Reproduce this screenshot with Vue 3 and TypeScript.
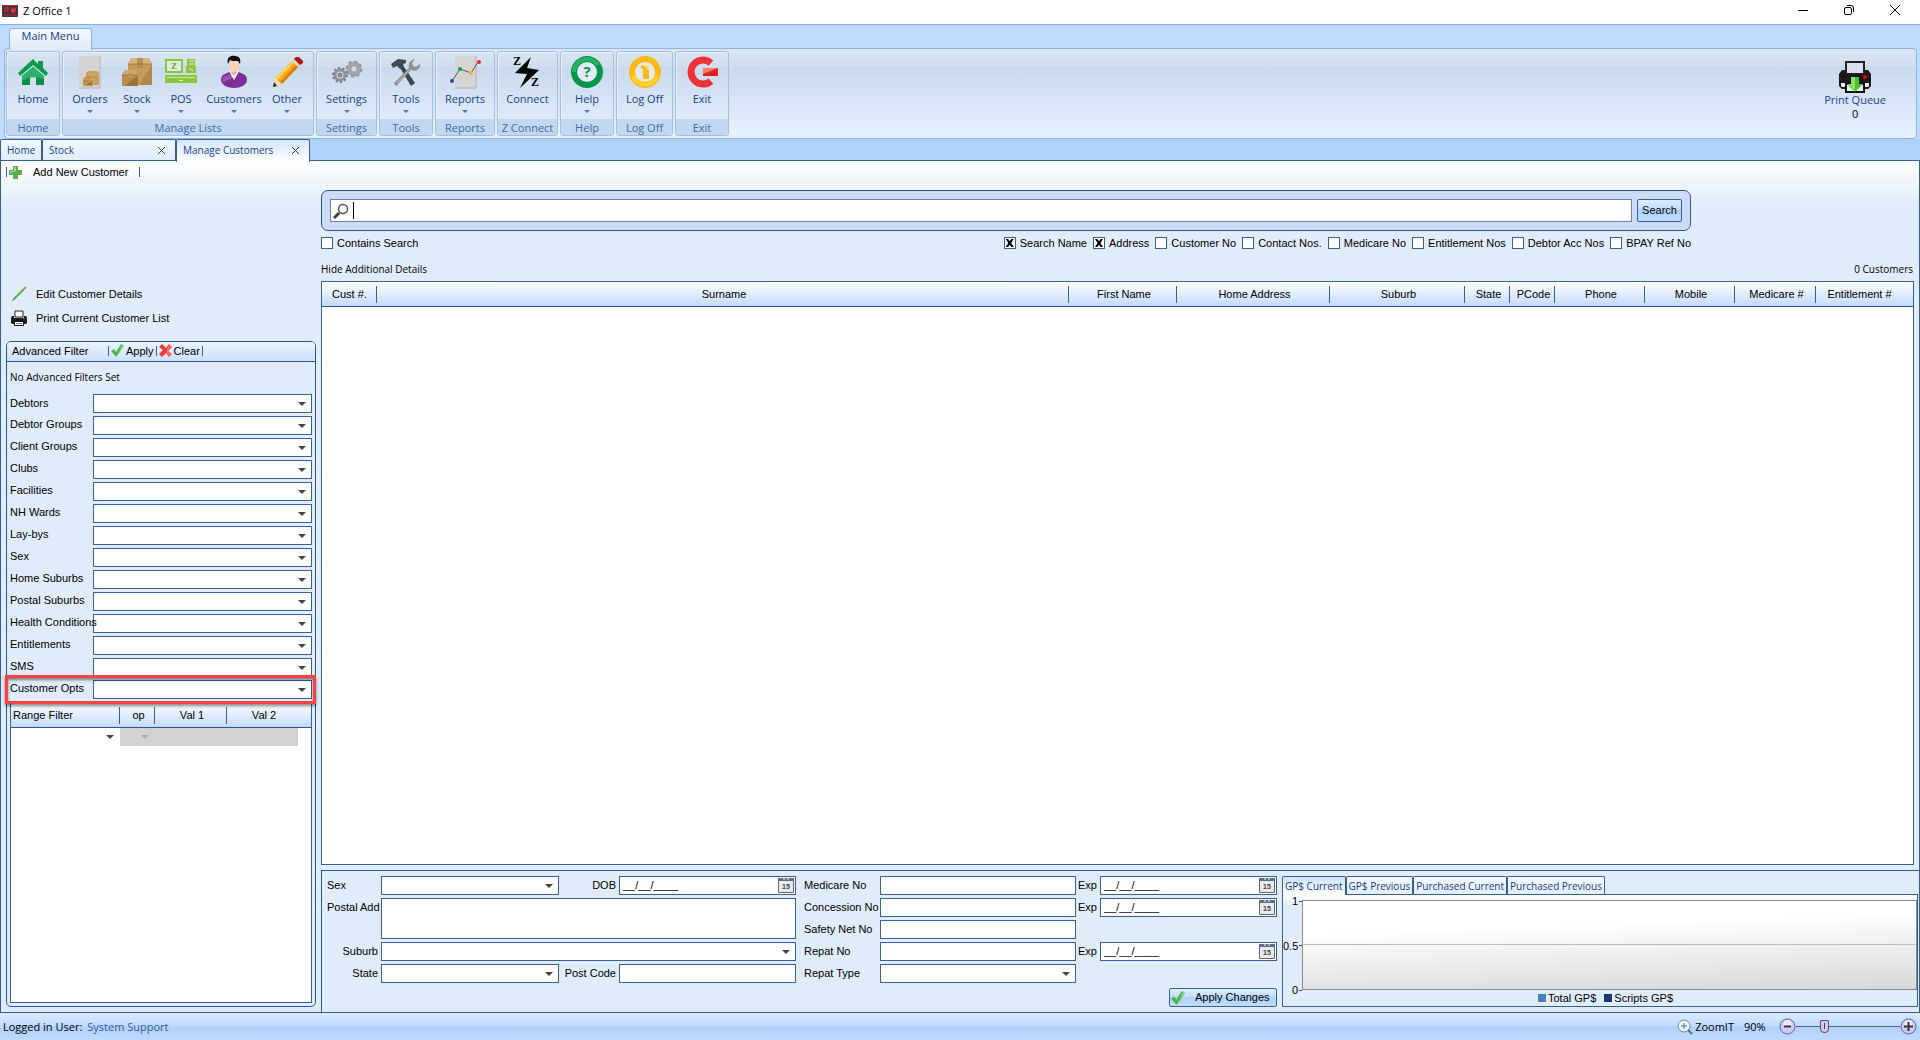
<script setup lang="ts">
import { ref } from 'vue'

interface RibbonButton { name: string; icon: string; width: number; menu: boolean }
interface RibbonGroup { title: string; buttons: RibbonButton[] }

const groups: RibbonGroup[] = [
  { title: 'Home', buttons: [{ name: 'Home', icon: 'home', width: 52, menu: false }] },
  {
    title: 'Manage Lists',
    buttons: [
      { name: 'Orders', icon: 'orders', width: 44, menu: true },
      { name: 'Stock', icon: 'stock', width: 50, menu: true },
      { name: 'POS', icon: 'pos', width: 38, menu: true },
      { name: 'Customers', icon: 'customers', width: 68, menu: true },
      { name: 'Other', icon: 'other', width: 38, menu: true },
    ],
  },
  { title: 'Settings', buttons: [{ name: 'Settings', icon: 'settings', width: 59, menu: true }] },
  { title: 'Tools', buttons: [{ name: 'Tools', icon: 'tools', width: 52, menu: true }] },
  { title: 'Reports', buttons: [{ name: 'Reports', icon: 'reports', width: 58, menu: true }] },
  { title: 'Z Connect', buttons: [{ name: 'Connect', icon: 'connect', width: 59, menu: false }] },
  { title: 'Help', buttons: [{ name: 'Help', icon: 'help', width: 52, menu: true }] },
  { title: 'Log Off', buttons: [{ name: 'Log Off', icon: 'logoff', width: 55, menu: false }] },
  { title: 'Exit', buttons: [{ name: 'Exit', icon: 'exit', width: 52, menu: false }] },
]

const filters = [
  'Debtors', 'Debtor Groups', 'Client Groups', 'Clubs', 'Facilities', 'NH Wards', 'Lay-bys', 'Sex',
  'Home Suburbs', 'Postal Suburbs', 'Health Conditions', 'Entitlements', 'SMS', 'Customer Opts',
]
const highlighted = 'Customer Opts'

const searchFields = ref([
  { label: 'Search Name', on: true },
  { label: 'Address', on: true },
  { label: 'Customer No', on: false },
  { label: 'Contact Nos.', on: false },
  { label: 'Medicare No', on: false },
  { label: 'Entitlement Nos', on: false },
  { label: 'Debtor Acc Nos', on: false },
  { label: 'BPAY Ref No', on: false },
])

const columns: { title: string; width?: number }[] = [
  { title: 'Cust #.', width: 55 },
  { title: 'Surname' },
  { title: 'First Name', width: 108 },
  { title: 'Home Address', width: 153 },
  { title: 'Suburb', width: 135 },
  { title: 'State', width: 45 },
  { title: 'PCode', width: 45 },
  { title: 'Phone', width: 90 },
  { title: 'Mobile', width: 90 },
  { title: 'Medicare #', width: 81 },
  { title: 'Entitlement #', width: 97 },
]

const chartTabs = ['GP$ Current', 'GP$ Previous', 'Purchased Current', 'Purchased Previous']
const activeChart = ref(chartTabs[0])
const contains = ref(false)
const query = ref('')
const emptyDate = '__/__/____'
const zoom = ref(90)
</script>

<template>
  <div class="app">
    <header class="titlebar">
      <svg class="logo" viewBox="0 0 16 12" aria-hidden="true">
        <rect width="16" height="12" rx="1" fill="#4a3239" />
        <path d="M3 3h3v3H3z" fill="none" stroke="#e8283c" />
        <path d="M9 4l2-1 1 1 1-2 1 3-2 3-3-1z" fill="#f0304a" />
        <path d="M0 .500h16M1 10h14" stroke="#b02a3a" />
      </svg>
      <span class="title">Z Office 1</span>
      <button class="win" aria-label="Minimise"><svg viewBox="0 0 12 12"><path d="M1 6.500h10" stroke="#000" fill="none" /></svg></button>
      <button class="win" aria-label="Restore"><svg viewBox="0 0 12 12"><path d="M1.500 5a1.500 1.500 0 0 1 1.500-1.500h4a1.500 1.500 0 0 1 1.500 1.500v4a1.500 1.500 0 0 1-1.500 1.500h-4a1.500 1.500 0 0 1-1.500-1.500zM4 1.500h4a2.500 2.500 0 0 1 2.500 2.500v4" stroke="#000" fill="none" /></svg></button>
      <button class="win" aria-label="Close"><svg viewBox="0 0 12 12"><path d="M1 1l10 10M11 1L1 11" stroke="#000" fill="none" /></svg></button>
    </header>

    <div class="ribbon-tabs"><button class="ribbon-tab">Main Menu</button></div>

    <nav class="ribbon">
      <section v-for="g in groups" :key="g.title" class="group">
        <div class="group-body">
          <button v-for="b in g.buttons" :key="b.name" class="tool" :style="{ width: b.width + 'px' }">
            <svg class="tool-icon" viewBox="0 0 32 32" aria-hidden="true">
              <g v-if="b.icon === 'home'">
                <path d="M16 3L1 17l2 3 13-11 13 11 2-3-5-5V5h-5v3z" fill="#0a9a4c" />
                <path d="M5 20l11-9 11 9v9h-8v-8h-6v8H5z" fill="#0b8f47" />
                <path d="M5 20l11-9 11 9v3c-9-3-16-2-22 2z" fill="#2fae6a" />
              </g>
              <g v-else-if="b.icon === 'orders'">
                <path d="M5 0h21v32H5z" fill="#d5d3d3" />
                <path d="M26 0v32H5" fill="none" stroke="#b4b2b6" />
                <path d="M12 17l3-2h8l2 2v12H12z" fill="#c79b58" />
                <path d="M9 23l2-2h6l2 2v7H9z" fill="#b98a48" />
                <path d="M9 23h10M12 18h13M9 30l10-7v7z" fill="#a87838" stroke="#dfbc84" stroke-width=".7" />
              </g>
              <g v-else-if="b.icon === 'stock'">
                <path d="M7 8l3-6h18l3 6v21H7z" fill="#c49b5e" />
                <path d="M7 8l3-6h18l3 6z" fill="#d8b57c" />
                <path d="M16 2h6v10h-6zM31 8v21H18z" fill="#ab8144" opacity=".7" />
                <path d="M1 19l3-5h10l3 5v11H1z" fill="#b98d4c" />
                <path d="M1 19l3-5h10l3 5z" fill="#d0a869" />
                <path d="M17 19v11H4z" fill="#9c7338" />
                <path d="M7 14h4v7H7z" fill="#c99f5e" />
                <path d="M1 19h16M7 8h24" stroke="#8a6530" stroke-width=".6" />
              </g>
              <g v-else-if="b.icon === 'pos'">
                <path d="M1 4h16v12H1z" fill="#deebe4" stroke="#8cc63f" stroke-width="2" />
                <path d="M0 19h32v8H0z" fill="#8cc63f" />
                <path d="M2 21.500h28" stroke="#c8e6a4" />
                <path d="M22 3h8v7h1v7H21v-7h1z" fill="#8cc63f" />
                <path d="M24 5h5M24 8h5M14 24.500h4" stroke="#e4f3d4" />
                <text x="9" y="13" text-anchor="middle" font-family="Liberation Serif" font-size="9" font-weight="bold" fill="#6aa528">Z</text>
                <path d="M24 12l4 3" stroke="#e4f3d4" />
              </g>
              <g v-else-if="b.icon === 'customers'">
                <path d="M3 24c0-6 6-7 9-8h8c3 1 9 2 9 8 0 5-7 8-13 8S3 29 3 24z" fill="#7c2f94" />
                <path d="M4 24c2-6 8-5 11-5s-2 5-10 7z" fill="#9a55b0" />
                <path d="M12 14h8v3l-4 7-4-7z" fill="#fff" />
                <path d="M13 13h6v4l-3 3-3-3z" fill="#e8b894" />
                <ellipse cx="16" cy="9" rx="5" ry="7" fill="#f8d4b4" />
                <path d="M10 8C8 0 14-1 17 0c5 0 6 4 5 8l-2-3c-4 0-7 0-8-1z" fill="#111" />
              </g>
              <g v-else-if="b.icon === 'other'">
                <path d="M4 22L23 3l6 6-18 19-8 2z" fill="#f6a81c" />
                <path d="M4 22L23 3l2 2L6 24z" fill="#ffd04c" />
                <path d="M9 26L27 7l2 2-18 19z" fill="#dc7d0c" />
                <path d="M4 22l7 6-9 3z" fill="#f5ddb4" />
                <path d="M3 26l3 4-4 1z" fill="#222" />
                <path d="M21 5l2-2 6 6-2 2z" fill="#d8dce0" />
                <path d="M23 3l2-2h3l4 4v2l-3 2z" fill="#b8141c" />
              </g>
              <g v-else-if="b.icon === 'settings'" fill="none">
                <circle cx="23" cy="13" r="5" stroke="#a4a4a6" stroke-width="5" />
                <circle cx="23" cy="13" r="7.500" stroke="#98989a" stroke-width="2" stroke-dasharray="2.900 3" />
                <circle cx="9" cy="19" r="5" stroke="#929294" stroke-width="3" />
                <circle cx="9" cy="19" r="7" stroke="#7c7c7f" stroke-width="2" stroke-dasharray="2.200 2.200" />
                <circle cx="9" cy="19" r="2" fill="#9a9a9c" stroke="#707072" />
              </g>
              <g v-else-if="b.icon === 'tools'">
                <path d="M9 10l3-2 13 19-4 3z" fill="#3b474b" />
                <path d="M1 8l7-5 8 1v3l-3 1 1 3-4 2-3-3-4 2z" fill="#3e4b50" />
                <path d="M21 14L8 28c-1 2-2 2-3 1s-1-2 0-3l14-14c-1-5 1-8 6-9l-3 4 1 3 3 1 4-3c1 4-3 8-9 6z" fill="#8f9092" />
                <path d="M20 13L7 27" stroke="#c0c1c3" />
              </g>
              <g v-else-if="b.icon === 'reports'">
                <path d="M6 0h21v32H6z" fill="#d6d5d5" />
                <path d="M27 0v32H6" fill="none" stroke="#aeb0b5" />
                <path d="M3 25l8-12 11 4 7-11" fill="none" stroke="#555" />
                <circle cx="3" cy="25" r="2" fill="#4a3f94" /><circle cx="11" cy="13" r="2" fill="#12a24c" />
                <circle cx="22" cy="17" r="2" fill="#f7b51a" /><circle cx="30" cy="6" r="2" fill="#e3262e" />
              </g>
              <g v-else-if="b.icon === 'connect'">
                <path d="M19 1L3 17l12 1-7 14 19-18-12-2z" fill="#000" />
                <text x="5" y="9" text-anchor="middle" font-family="Liberation Serif" font-size="12" font-weight="bold">Z</text>
                <text x="23" y="30" text-anchor="middle" font-family="Liberation Serif" font-size="12" font-weight="bold">Z</text>
              </g>
              <g v-else-if="b.icon === 'help'">
                <circle cx="16" cy="16" r="13" fill="#e2ebf5" stroke="#079547" stroke-width="6" />
                <path d="M3 16a13 13 0 0 1 24-7" fill="none" stroke="#2cae66" stroke-width="4" />
                <text x="16" y="21" text-anchor="middle" font-family="Open Sans" font-size="15" font-weight="bold" fill="#079547">?</text>
              </g>
              <g v-else-if="b.icon === 'logoff'">
                <circle cx="16" cy="16" r="13" fill="#e2ebf5" stroke="#fdb913" stroke-width="6" />
                <path d="M4 20a13 13 0 0 0 24 0" fill="none" stroke="#ffd02e" stroke-width="5" />
                <path d="M12 9h8v14h-6V12l-2 1z" fill="#fdb913" /><path d="M13 9h7v5z" fill="#ffe27a" />
              </g>
              <g v-else>
                <path d="M25 7a12 12 0 1 0 0 18" fill="none" stroke="#ee3338" stroke-width="7" />
                <path d="M17 12h15v8H17z" fill="#e51c23" /><path d="M17 12h15l-15 6z" fill="#f58060" />
              </g>
            </svg>
            <span>{{ b.name }}</span>
            <i v-if="b.menu" class="caret"></i>
          </button>
        </div>
        <h2 class="group-title">{{ g.title }}</h2>
      </section>
      <button class="queue">
        <svg class="tool-icon" viewBox="0 0 32 32" aria-hidden="true">
          <path d="M7 1h18v12H7z" fill="#d7e1ee" stroke="#222" stroke-width="2" />
          <path d="M3 9h3v4h20V9h3l3 4v12l-3 3H3l-3-3V13z" fill="#191919" />
          <path d="M2 22h4v4H3l-1-1zM26 22h4v3l-1 1h-3z" fill="#e4ebf4" />
          <path d="M7 23h18v8H7z" fill="#eef3fa" stroke="#111" stroke-width="2" />
          <circle cx="26" cy="16" r="2" fill="#f40000" />
          <path d="M12 16h8v7h4l-8 8-8-8h4z" fill="#4fc12c" /><path d="M12 16h4v14l-7-7h3z" fill="#8be263" />
        </svg>
        <span>Print Queue</span>
        <span class="queue-count">0</span>
      </button>
    </nav>

    <div class="doc-tabs">
      <button class="doc-tab home">Home</button>
      <button class="doc-tab wide">Stock<svg viewBox="0 0 9 9"><path d="M1 1l7 7M8 1L1 8" /></svg></button>
      <button class="doc-tab wide active">Manage Customers<svg viewBox="0 0 9 9"><path d="M1 1l7 7M8 1L1 8" /></svg></button>
    </div>

    <main class="work">
      <div class="toolbar">
        <i class="sep"></i>
        <button class="add">
          <svg viewBox="0 0 13 13"><path d="M4 0h5v4h4v5H9v4H4V9H0V4h4z" fill="#5dab4a" /><path d="M5 1h2v4l-6 2V5h4z" fill="#a8d898" /></svg>
          Add New Customer
        </button>
        <i class="sep"></i>
      </div>

      <div class="columns">
        <aside class="side">
          <div class="links">
            <button class="link">
              <svg viewBox="0 0 16 16"><path d="M2 14L13 3" stroke="#4fae58" stroke-width="2" /><path d="M1 15l2-2" stroke="#c6a070" /><path d="M13 3l2-2" stroke="#d8746a" stroke-width="2" /></svg>
              Edit Customer Details
            </button>
            <button class="link">
              <svg viewBox="0 0 16 16"><path d="M4 1h8v6H4z" fill="#fff" stroke="#222" /><path d="M1 6h2v2h10V6h2l1 2v5l-1 1H1l-1-1V8z" fill="#1b1b1b" /><path d="M3.500 11.500h9v4h-9z" fill="#fff" stroke="#111" /><path d="M5 13.500h6" stroke="#777" /><path d="M12 8h2v1h-2z" fill="#e00" /></svg>
              Print Current Customer List
            </button>
          </div>

          <section class="filter">
            <div class="filter-head">
              <span class="filter-title">Advanced Filter</span>
              <i class="sep"></i>
              <button><svg viewBox="0 0 13 13"><path d="M0 7l3-2 2 3 5-8 3 2-8 11z" fill="#4cb848" /><path d="M11 0l2 2-5 7z" fill="#84d67c" /></svg>Apply</button>
              <i class="sep"></i>
              <button><svg viewBox="0 0 13 13"><path d="M3 0l4 4 3-4 3 3-4 4 4 3-3 3-3-4-4 4-3-3 4-4-4-3z" fill="#ec3a30" /><path d="M10 0l3 3-4 4 4 3-3 3-3-5z" fill="#f4705c" /></svg>Clear</button>
              <i class="sep"></i>
            </div>
            <p class="filter-note">No Advanced Filters Set</p>
            <div class="filter-rows">
              <div v-for="(f, i) in filters" :key="f" class="filter-row" :class="{ marked: f === highlighted }">
                <label :for="'filter-' + i">{{ f }}</label>
                <div class="combo"><select :id="'filter-' + i"><option></option></select></div>
              </div>
            </div>
            <div class="range">
              <table>
                <colgroup><col class="c-filter"><col class="c-op"><col class="c-val"><col></colgroup>
                <thead><tr><th class="left">Range Filter</th><th>op</th><th>Val 1</th><th>Val 2</th></tr></thead>
                <tbody>
                  <tr>
                    <td><i class="arrow"></i></td>
                    <td colspan="3"><div class="disabled"><i class="arrow"></i></div></td>
                  </tr>
                </tbody>
              </table>
            </div>
          </section>
        </aside>

        <section class="main">
          <form class="search" @submit.prevent>
            <label class="search-box">
              <svg viewBox="0 0 16 16"><circle cx="10" cy="6" r="4.500" fill="#f2f5fa" stroke="#555" stroke-width="1.500" /><path d="M1 15l5-5" stroke="#3c3c3c" stroke-width="3" /></svg>
              <i class="cursor"></i>
              <input v-model="query" type="text" aria-label="Search customers">
            </label>
            <button class="btn">Search</button>
          </form>

          <div class="options">
            <label class="check first"><input v-model="contains" type="checkbox">Contains Search</label>
            <label v-for="s in searchFields" :key="s.label" class="check"><input v-model="s.on" type="checkbox">{{ s.label }}</label>
          </div>

          <div class="meta"><a href="#">Hide Additional Details</a><span>0 Customers</span></div>

          <div class="grid">
            <table>
              <colgroup><col v-for="c in columns" :key="c.title" :style="c.width ? { width: c.width + 'px' } : {}"></colgroup>
              <thead><tr><th v-for="c in columns" :key="c.title">{{ c.title }}</th></tr></thead>
              <tbody></tbody>
            </table>
          </div>

          <section class="details">
            <div class="form person">
              <label class="start" for="sex">Sex</label>
              <div class="combo"><select id="sex"><option></option></select></div>
              <label for="dob">DOB</label>
              <div class="date"><input id="dob" type="text" :value="emptyDate"><button aria-label="Pick date of birth"><svg viewBox="0 0 16 15"><path d="M.500 .500h15v14H.500z" fill="#e6e9ee" stroke="#666" /><path d="M0 0h16v3H0z" fill="#5b7088" /><path d="M6 0v2M10 0v2" stroke="#fff" /><text x="8" y="11" text-anchor="middle">15</text></svg></button></div>
              <label class="start top" for="postal">Postal Add</label>
              <textarea id="postal"></textarea>
              <label for="suburb">Suburb</label>
              <div class="combo span"><select id="suburb"><option></option></select></div>
              <label for="state">State</label>
              <div class="combo"><select id="state"><option></option></select></div>
              <label for="postcode">Post Code</label>
              <input id="postcode" type="text">
            </div>

            <div class="form cards">
              <template v-for="c in ['Medicare No', 'Concession No', 'Safety Net No', 'Repat No']" :key="c">
                <label class="start" :for="c">{{ c }}</label>
                <input :id="c" type="text">
                <template v-if="c !== 'Safety Net No'">
                  <label :for="c + ' expiry'">Exp</label>
                  <div class="date"><input :id="c + ' expiry'" type="text" :value="emptyDate"><button aria-label="Pick expiry date"><svg viewBox="0 0 16 15"><path d="M.500 .500h15v14H.500z" fill="#e6e9ee" stroke="#666" /><path d="M0 0h16v3H0z" fill="#5b7088" /><path d="M6 0v2M10 0v2" stroke="#fff" /><text x="8" y="11" text-anchor="middle">15</text></svg></button></div>
                </template>
                <span v-else class="span"></span>
              </template>
              <label class="start" for="repat-type">Repat Type</label>
              <div class="combo"><select id="repat-type"><option></option></select></div>
              <span class="span"></span>
              <button class="btn apply"><svg viewBox="0 0 13 13"><path d="M0 7l3-2 2 3 5-8 3 2-8 11z" fill="#4cb848" /><path d="M11 0l2 2-5 7z" fill="#84d67c" /></svg>Apply Changes</button>
            </div>

            <div class="chart">
              <div class="chart-tabs">
                <button v-for="t in chartTabs" :key="t" :class="{ active: t === activeChart }" @click="activeChart = t">{{ t }}</button>
              </div>
              <div class="chart-body">
                <div class="axis"><span>1</span><span>0.5</span><span>0</span></div>
                <div class="plot"><div class="half"></div></div>
                <div class="legend"><span><i class="total"></i>Total GP$</span><span><i class="scripts"></i>Scripts GP$</span></div>
              </div>
            </div>
          </section>
        </section>
      </div>
    </main>

    <footer class="status">
      <span>Logged in User:</span><span class="user">System Support</span>
      <svg class="lens" viewBox="0 0 16 16"><circle cx="7" cy="7" r="6" fill="#eaf3ff" stroke="#7d8590" /><path d="M4 7h6M7 4v6" stroke="#3f74c8" /><path d="M11 11l4 4" stroke="#666" stroke-width="2" /></svg>
      <span>ZoomIT</span><span class="percent">{{ zoom }}%</span>
      <button class="round" aria-label="Zoom out"><svg viewBox="0 0 17 17"><circle cx="8.500" cy="8.500" r="7.500" fill="#cfc6fb" stroke="#4c679b" /><circle cx="8.500" cy="6" r="4" fill="#f1edff" /><path d="M5 8.500h7" stroke="#333" stroke-width="2" /></svg></button>
      <input v-model.number="zoom" class="slider" type="range" min="60" max="180" aria-label="Zoom">
      <button class="round" aria-label="Zoom in"><svg viewBox="0 0 17 17"><circle cx="8.500" cy="8.500" r="7.500" fill="#cfc6fb" stroke="#4c679b" /><circle cx="8.500" cy="6" r="4" fill="#f1edff" /><path d="M4 8.500h9M8.500 4v9" stroke="#333" stroke-width="2" /></svg></button>
    </footer>
  </div>
</template>

<style>
body { margin: 0; }
</style>

<style scoped>
* { box-sizing: border-box; }
.app {
  --line: #36609c;
  --edge: #2a569b;
  --pale: #e0ecfa;
  --ui: "Open Sans", "Noto Sans", sans-serif;
  display: flex;
  flex-direction: column;
  min-height: 100vh;
  background: #bfdbff;
  color: #000;
  font: 11px/14px "Liberation Sans", Arial, sans-serif;
}
button, input, select, textarea { font: inherit; color: inherit; margin: 0; padding: 0; border: 0; background: none; border-radius: 0; outline: none; }
button { white-space: nowrap; }
svg { display: block; flex: none; }

.titlebar { display: flex; align-items: center; height: 24px; padding: 0 12px 2px 2px; background: #fff; font-family: var(--ui); }
.logo { width: 16px; height: 12px; }
.title { margin-left: 5px; flex: 1; }
.win { width: 46px; height: 20px; display: flex; align-items: center; justify-content: center; margin-bottom: 2px; }
.win svg { width: 12px; height: 12px; }
.win:last-child { width: 26px; margin-left: 10px; }

.ribbon-tabs { height: 24px; padding: 3px 0 0 9px; border-top: 1px solid #86aee0; background: #bfdbff; }
.ribbon-tab { display: block; width: 83px; height: 22px; padding-bottom: 7px; border: 1px solid #8db2e3; border-bottom: 0; border-radius: 3px 3px 0 0; background: linear-gradient(#f3f8ff, #dfeaf8); color: #15428b; font-family: var(--ui); position: relative; }

.ribbon { display: flex; gap: 2px; height: 91px; margin: 0 3px 0 4px; padding: 2px 30px 2px 1px; border: 1px solid #8db2e3; border-radius: 4px; background: linear-gradient(#dbe6f4 0, #cfdded 20%, #c9d9ed 21%, #e7f2ff 100%); font-family: var(--ui); color: #15428b; }
.group { display: flex; flex-direction: column; border: 1px solid #a5bfdc; border-radius: 3px; overflow: hidden; box-shadow: inset 1px 1px 0 #e8f1fb; }
.group-body { display: flex; flex: 1; padding-top: 4px; justify-content: center; }
.group:nth-child(2) .group-body { padding-left: 5px; padding-right: 7px; }
.tool { display: flex; flex-direction: column; align-items: center; height: 60px; }
.tool-icon { width: 32px; height: 32px; margin-bottom: 4px; overflow: visible; }
.caret { margin-top: 4px; border: 3px solid transparent; border-top: 3px solid #5079b5; border-bottom: 0; }
.group-title { margin: 0; height: 16px; font: inherit; line-height: 18px; text-align: center; background: #c1d8f0; color: #3e6aaa; }
.queue { display: flex; flex-direction: column; align-items: center; margin-left: auto; padding-top: 10px; color: #1f3f96; align-self: flex-start; }
.queue .tool-icon { margin-bottom: 0; }
.queue-count { color: #000; }

.doc-tabs { display: flex; height: 22px; background: #afd2fb; font: 10px/20px var(--ui); }
.doc-tab { display: flex; align-items: center; justify-content: space-between; height: 21px; padding: 0 7px 0 6px; color: #15428b; border: 1px solid var(--line); border-bottom: 0; border-radius: 2px 2px 0 0; background: linear-gradient(#f1f7ff, #dfecfc); }
.doc-tab.home { width: 42px; }
.doc-tab.wide { width: 134px; padding-right: 9px; }
.doc-tab.active { height: 23px; padding-bottom: 2px; background: linear-gradient(#d4e6ff, #fff); position: relative; }
.doc-tab svg { width: 9px; height: 9px; stroke: #15428b; fill: none; }

.work { flex: 1; display: flex; flex-direction: column; border: 1px solid var(--line); margin-top: -1px; background: linear-gradient(#fff 0, var(--pale) 45px); }
.toolbar { display: flex; align-items: center; height: 22px; padding-left: 5px; }
.sep { flex: none; width: 1px; height: 10px; background: var(--line); }
.add { display: flex; align-items: center; gap: 11px; margin-left: 2px; margin-right: 11px; }
.add svg { width: 13px; height: 13px; }

.columns { flex: 1; display: flex; align-items: stretch; }
.side { flex: none; width: 320px; display: flex; flex-direction: column; padding: 99px 5px 5px; }
.links { margin-bottom: 11px; }
.link { display: flex; align-items: center; gap: 9px; height: 24px; padding-left: 5px; }
.link svg { width: 16px; height: 16px; }
.filter { flex: 1; display: flex; flex-direction: column; border: 1px solid var(--edge); border-radius: 5px; }
.filter-head { display: flex; align-items: center; height: 20px; padding: 0 0 2px 5px; gap: 2px; border-bottom: 1px solid var(--edge); border-radius: 4px 4px 0 0; background: linear-gradient(#eaf3ff, #cde0fd); }
.filter-head button { display: flex; align-items: center; gap: 2px; }
.filter-head svg { width: 13px; height: 13px; }
.filter-title { width: 94px; }
.filter-note { margin: 8px 0 9px 3px; font: 10px/14px var(--ui); }
.filter-rows { display: flex; flex-direction: column; gap: 3px; padding: 1px 3px 0; }
.filter-row { display: flex; height: 19px; position: relative; }
.filter-row label { flex: none; width: 83px; white-space: nowrap; line-height: 16px; position: relative; z-index: 1; }
.filter-row:first-child label { line-height: 18px; }
.marked::after { content: ""; position: absolute; inset: -5px -4px -5px -5px; border: 3px solid #f94343; box-shadow: 0 2px 3px #0007, inset 0 2px 3px #0007; pointer-events: none; z-index: 1; }
.combo { position: relative; flex: 1; height: 19px; }
.combo select { display: block; width: 100%; height: 19px; appearance: none; border: 1px solid var(--line); background: #fff; }
.combo::after, .arrow { content: ""; position: absolute; right: 6px; top: 8px; border: 4px solid transparent; border-top-color: #444; border-bottom: 0; pointer-events: none; }
.range { flex: 1; margin: 3px; border: 1px solid var(--line); background: #fff; }
table { width: 100%; table-layout: fixed; border-collapse: separate; border-spacing: 0; }
th { height: 25px; padding: 0 0 0 2px; font-weight: normal; text-align: center; white-space: nowrap; border-bottom: 1px solid var(--edge); background: linear-gradient(var(--line), var(--line)) right center / 1px 17px no-repeat, linear-gradient(#fff, #c3dafc); }
th:first-child { padding-left: 0; }
th:last-child { padding-right: 12px; background: linear-gradient(#fff, #c3dafc); }
th.left { text-align: left; padding-left: 2px; }
.c-filter { width: 109px; }
.c-op { width: 35px; }
.c-val { width: 72px; }
td { position: relative; padding: 0; height: 18px; }
td > .arrow { top: 7px; }
.disabled { height: 18px; margin-right: 13px; background: #d2d2d2; }
.disabled .arrow { left: 21px; right: auto; top: 7px; border-top-color: #aaa; }

.main { flex: 1; min-width: 0; display: flex; flex-direction: column; }
.search { display: flex; gap: 5px; height: 41px; margin: 7px 228px 4px 0; padding: 8px; border: 1px solid var(--edge); border-radius: 7px; background: #cddbf5; }
.search-box { flex: 1; display: flex; align-items: center; height: 23px; padding-left: 2px; border: 1px solid #6284b6; background: #fff; }
.search-box svg { width: 16px; height: 16px; }
.search-box input { flex: 1; min-width: 0; height: 21px; }
.cursor { width: 1px; height: 17px; margin-left: 4px; background: #000; }
.btn { display: flex; align-items: center; justify-content: center; border: 1px solid var(--line); border-radius: 2px; background: linear-gradient(#deecff 0, #c2dcff 45%, #acd0fb 50%, #c2dcff 100%); }
.search .btn { width: 45px; height: 23px; padding-bottom: 1px; }
.options { display: flex; gap: 6px; height: 16px; margin-right: 228px; align-items: center; }
.check { display: flex; align-items: center; gap: 4px; white-space: nowrap; }
.check.first { margin-right: auto; }
.check input { appearance: none; width: 12px; height: 12px; border: 1px solid var(--line); background: #fff; }
.check input:checked::after { content: ""; display: block; width: 8px; height: 8px; margin: 1px; background: #000; clip-path: polygon(0 0, 30% 0, 50% 28%, 70% 0, 100% 0, 68% 50%, 100% 100%, 70% 100%, 50% 72%, 30% 100%, 0 100%, 32% 50%); }
.meta { display: flex; justify-content: space-between; margin: 11px 6px 5px 0; font: 10px/14px var(--ui); }
.meta a { color: inherit; text-decoration: none; }
.grid { flex: 1; margin-right: 5px; border: 1px solid var(--line); background: #fff; }

.details { display: flex; height: 142px; margin-top: 5px; padding: 5px 1px 5px 5px; border-top: 1px solid var(--edge); border-left: 1px solid var(--edge); background: var(--pale); }
.form { flex: none; display: grid; grid-auto-rows: 19px; row-gap: 3px; align-content: start; line-height: 19px; }
.person { grid-template-columns: 54px 178px 60px 177px; }
.cards { grid-template-columns: 76px 196px 24px 177px; margin-left: 8px; }
.form label { text-align: right; padding-right: 3px; white-space: nowrap; }
.form label.start { text-align: left; padding: 0; }
.form > input, .form textarea, .date { border: 1px solid var(--line); background: #fff; min-width: 0; }
.form textarea { grid-column: span 3; grid-row: span 2; resize: none; }
.form .top { grid-row: span 2; }
.combo.span { grid-column: span 3; }
span.span { grid-column: span 2; }
.date { display: flex; align-items: center; padding: 0 1px 0 3px; }
.date input { flex: 1; min-width: 0; height: 17px; }
.date svg { width: 16px; height: 15px; }
.date text { font: bold 7px "Liberation Sans", sans-serif; fill: #444; }
.apply { grid-column: 1 / -1; justify-self: end; justify-content: flex-start; width: 108px; height: 19px; margin-top: 2px; padding-left: 1px; gap: 10px; }
.apply svg { width: 14px; height: 14px; }

.chart { flex: 1; min-width: 0; display: flex; flex-direction: column; margin-left: 5px; }
.chart-tabs { display: flex; height: 19px; font: 10px/16px var(--ui); }
.chart-tabs button { height: 18px; padding: 0 2px; color: #15428b; border: 1px solid var(--line); border-bottom: 0; border-radius: 2px 2px 0 0; background: linear-gradient(#f4f9ff, #e2eefc); }
.chart-tabs button.active { height: 19px; background: linear-gradient(#cfe3ff, #fff); position: relative; }
.chart-body { flex: 1; display: grid; grid-template: 95px 1fr / 19px 1fr; margin-top: -1px; border: 1px solid var(--line); background: linear-gradient(#fff, var(--pale) 10px); }
.axis { grid-row: 1 / 3; display: flex; flex-direction: column; justify-content: space-between; height: 101px; line-height: 12px; }
.axis span { display: flex; align-items: center; justify-content: flex-end; gap: 1px; }
.axis span::after { content: ""; width: 3px; height: 1px; background: #444; }
.plot { margin-top: 5px; border: 1px solid #8c8c8c; background: linear-gradient(178deg, #fff 30%, #d8d8d8); }
.half { height: 50%; border-bottom: 1px solid #bdbdbd; }
.legend { display: flex; justify-content: center; gap: 8px; padding-right: 8px; line-height: 14px; }
.legend span { display: flex; align-items: center; gap: 2px; }
.legend i { width: 8px; height: 8px; }
.total { background: #4682b4; }
.scripts { background: #1a3b69; }

.status { display: flex; align-items: center; height: 27px; padding: 0 3px; background: linear-gradient(#d9eaff 0, #c0dbff 48%, #aed1fb 52%, #c1daff 100%); font-family: var(--ui); }
.user { margin-left: 5px; color: #35599c; }
.lens { width: 16px; height: 16px; margin-left: auto; margin-right: 2px; }
.percent { width: 22px; margin: 0 13px 0 10px; white-space: nowrap; }
.round svg { width: 17px; height: 17px; }
.slider { appearance: none; width: 104px; height: 17px; background: linear-gradient(#5c6470, #5c6470) center / 100% 1px no-repeat; }
.slider::-webkit-slider-thumb { appearance: none; box-sizing: border-box; width: 9px; height: 13px; border: 1px solid #555; border-radius: 1px 1px 4px 4px; background: linear-gradient(#444, #444) 3px 2px / 1px 6px no-repeat, #d3c8f8; }
</style>
